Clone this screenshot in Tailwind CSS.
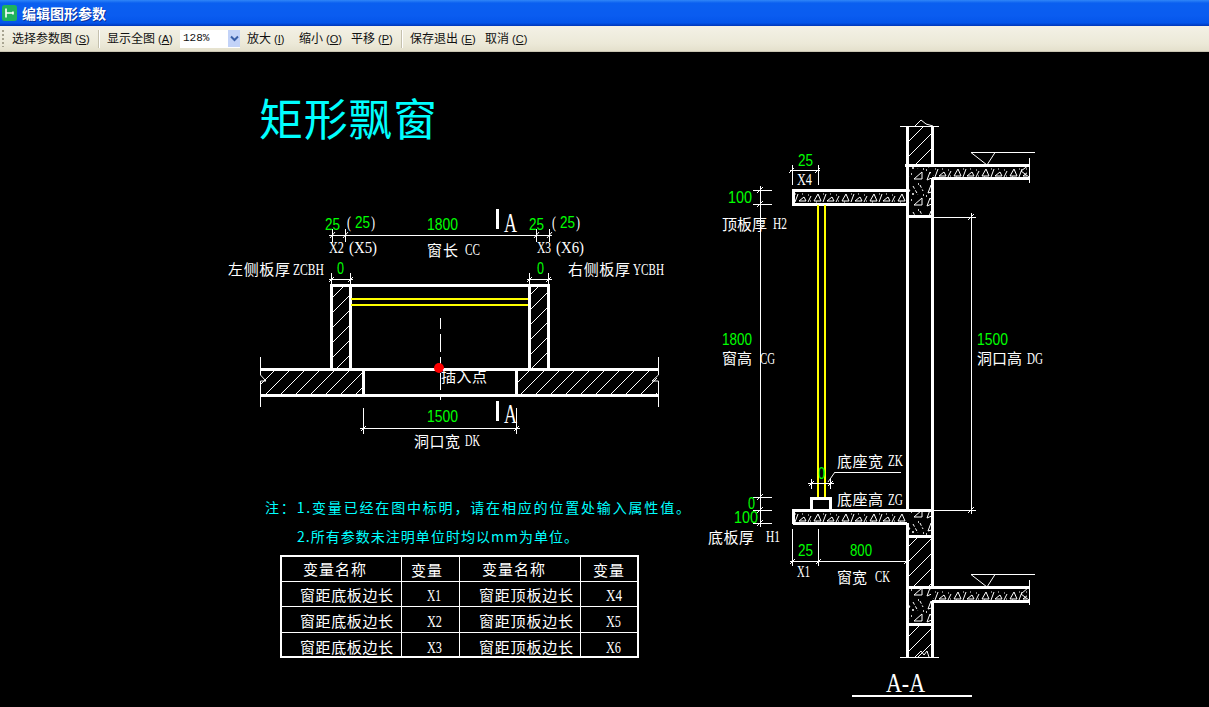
<!DOCTYPE html>
<html lang="zh-CN">
<head>
  <meta charset="UTF-8" />
  <title>编辑图形参数</title>
  <script src="https://cdn.jsdelivr.net/npm/@tailwindcss/browser@4"></script>
</head>
<body class="h-[707px] w-[1209px] overflow-hidden bg-black flex flex-col font-['Noto_Sans_CJK_SC',sans-serif]">

  <!-- title bar -->
  <div class="h-[26px] shrink-0 flex items-center pl-[2px] gap-[5px] bg-[linear-gradient(#2f86f8_0%,#0a5ff0_12%,#0a5cf0_60%,#0455ea_88%,#0036b8_100%)]">
    <svg width="15" height="16" viewBox="0 0 15 16">
      <rect x="0" y="0" width="15" height="16" rx="2.5" fill="#1fb35c" />
      <path d="M4 3.5V12.5M4 8H11M11 6.5V9.5" stroke="#fff" stroke-width="1.6" fill="none" />
    </svg>
    <span class="text-[14px] font-bold leading-none text-white [text-shadow:1px_1px_0_#0a2f9a]">编辑图形参数</span>
  </div>

  <!-- toolbar -->
  <div class="h-[26px] shrink-0 flex items-center text-[12px] leading-none text-[#111] bg-[linear-gradient(#f3f1e6,#ece9d8_70%,#e4e0cc)] border-b border-[#c9c5b2]">
    <div class="ml-[2px] w-[2px] h-[17px] bg-[repeating-linear-gradient(#a8a491_0_2px,transparent_2px_4px)]"></div>
    <span class="ml-[8px] w-[77px] whitespace-nowrap">选择参数图<span class="ml-[3px] font-['Liberation_Sans'] text-[11px]">(<u>S</u>)</span></span>
    <div class="ml-[9px] w-[2px] h-[18px] bg-[#c5c1ae] border-r border-white"></div>
    <span class="ml-[7px] w-[65px] whitespace-nowrap">显示全图<span class="ml-[3px] font-['Liberation_Sans'] text-[11px]">(<u>A</u>)</span></span>
    <div class="ml-[8px] w-[60px] h-[18px] bg-white flex items-center justify-between pl-[3px] font-['Liberation_Mono'] text-[11px]">
      <span>128%</span>
      <div class="w-[12px] h-[17px] bg-[#c3d3f8] flex items-center justify-center">
        <svg width="9" height="7" viewBox="0 0 9 7"><path d="M1 1.5L4.5 5L8 1.5" stroke="#3a5fa8" stroke-width="2" fill="none" /></svg>
      </div>
    </div>
    <span class="ml-[7px] w-[40px] whitespace-nowrap">放大<span class="ml-[3px] font-['Liberation_Sans'] text-[11px]">(<u>I</u>)</span></span>
    <span class="ml-[12px] w-[41px] whitespace-nowrap">缩小<span class="ml-[3px] font-['Liberation_Sans'] text-[11px]">(<u>O</u>)</span></span>
    <span class="ml-[11px] w-[41px] whitespace-nowrap">平移<span class="ml-[3px] font-['Liberation_Sans'] text-[11px]">(<u>P</u>)</span></span>
    <div class="ml-[9px] w-[2px] h-[18px] bg-[#c5c1ae] border-r border-white"></div>
    <span class="ml-[7px] w-[64px] whitespace-nowrap">保存退出<span class="ml-[3px] font-['Liberation_Sans'] text-[11px]">(<u>E</u>)</span></span>
    <span class="ml-[11px] w-[41px] whitespace-nowrap">取消<span class="ml-[3px] font-['Liberation_Sans'] text-[11px]">(<u>C</u>)</span></span>
  </div>

  <!-- drawing canvas, coordinates are page pixels -->
  <svg class="block shrink-0" width="1209" height="655" viewBox="0 52 1209 655">
    <defs>
      <pattern id="hatch" width="15" height="15" patternUnits="userSpaceOnUse">
        <path d="M0 15L15 0" stroke="#fff" stroke-width="1" shape-rendering="crispEdges" />
      </pattern>
      <pattern id="concrete" width="28" height="14" patternUnits="userSpaceOnUse">
        <path d="M2 9L6 2L9 9ZM15 9L20 5L22 9Z" stroke="#fff" fill="none" stroke-width="1" />
        <path d="M11 10L14 2M24 10L27 4" stroke="#fff" stroke-width="1" />
        <path d="M11 2h1M24 3h1M4 10h1M18 2h1M26 9h1" stroke="#fff" stroke-width="1" />
      </pattern>
      <pattern id="concreteTop" href="#concrete" y="192" />
      <pattern id="concreteBottom" href="#concrete" y="512" />
      <pattern id="concreteFloor1" href="#concrete" y="167" />
      <pattern id="concreteFloor2" href="#concrete" y="590" />
      <pattern id="concreteBig" width="25" height="26" patternUnits="userSpaceOnUse">
        <path d="M3 11L6 3L10 9ZM14 23L22 16L22 23ZM2 24L5 16L9 21Z" stroke="#fff" fill="none" stroke-width="1" />
        <path d="M13 4L18 13M20 3L23 9" stroke="#fff" stroke-width="1" stroke-dasharray="3 2" />
        <path d="M12 12h2M1 14h1M18 2h1M23 13h1M11 18h1" stroke="#fff" stroke-width="1.5" />
      </pattern>
    </defs>

    <!-- fills -->
    <rect x="333" y="287" width="16" height="81" fill="url(#hatch)" />
    <rect x="531" y="287" width="16" height="81" fill="url(#hatch)" />
    <rect x="261" y="371" width="101" height="23" fill="url(#hatch)" />
    <rect x="518" y="371" width="139" height="23" fill="url(#hatch)" />
    <rect x="908" y="127" width="23" height="37" fill="url(#hatch)" />
    <rect x="908" y="537" width="23" height="49" fill="url(#hatch)" />
    <rect x="908" y="625" width="23" height="32" fill="url(#hatch)" />
    <rect x="794" y="192" width="112" height="11" fill="url(#concreteTop)" />
    <rect x="794" y="512" width="112" height="10" fill="url(#concreteBottom)" />
    <rect x="933" y="167" width="94" height="10" fill="url(#concreteFloor1)" />
    <rect x="933" y="589" width="94" height="11" fill="url(#concreteFloor2)" />
    <rect x="909" y="167" width="22" height="48" fill="url(#concreteBig)" />
    <rect x="909" y="512" width="22" height="23" fill="url(#concreteBig)" />
    <rect x="909" y="589" width="22" height="34" fill="url(#concreteBig)" />

    <!-- heavy outlines -->
    <g stroke="#fff" stroke-width="3" fill="none" shape-rendering="crispEdges">
      <path d="M331.5 369V285.5H548.5V369M350.5 287V369M529.5 287V369" />
      <path d="M260 369.5H658M260 395H658M363.5 369V395M516.5 369V395" />
      <path d="M907 126V510M907 523V657M932 126V165M932 178V587M932 601V657" />
      <path d="M905 165.5H1029M932 178.5H1029M907 216.5H932" />
      <path d="M907 190.5H793V204H907" />
      <path d="M811.5 510V498.5H830.5V510" />
      <path d="M793 510.5H932M793 523H907V523M793 509V524M907 536.5H932M907 587.5H1029M932 601H1029M907 624.5H932" />
    </g>
    <path d="M852 696H972" stroke="#fff" stroke-width="2" shape-rendering="crispEdges" />
    <path d="M497.5 209V229M497.5 401V421" stroke="#fff" stroke-width="3" shape-rendering="crispEdges" />

    <!-- glazing -->
    <g stroke="#ffff00" stroke-width="2" shape-rendering="crispEdges">
      <path d="M351 299H528M351 305H528" />
      <path d="M817.5 205V497M824.5 205V497" />
    </g>

    <!-- thin dimension lines -->
    <g stroke="#fff" stroke-width="1" fill="none" shape-rendering="crispEdges">
      <path d="M329 235.5H552M332.5 229V242M345.5 229V242M536.5 229V242M549.5 229V242" />
      <path d="M329 279.5H353M527 279.5H552M331.5 273V284M350.5 273V284M529.5 273V284M548.5 273V284" />
      <path d="M360 428.5H520M363.5 408V434M516.5 408V434" />
      <path d="M260.5 357V375M260.5 388V407M658.5 357V375M658.5 388V407" />
      <path d="M440.5 318V329M440.5 334V352M440.5 357V366M440.5 373V390M440.5 395V400" />
      <path d="M900 126.5H939M900 657.5H939" />
      <path d="M971 152.5H1035M971 574.5H1035M1029.5 158V183M1029.5 580V605" />
      <path d="M932 217.5H976M932 510.5H976M971.5 213V514" />
      <path d="M790 170.5H820M792.5 165V185M818.5 165V185" />
      <path d="M753 190.5H772M753 204.5H772M753 497.5H772M753 510.5H772M753 523.5H772M760.5 186V527" />
      <path d="M808 483.5H834M811.5 479V489M830.5 479V489M835 472.5H901" />
      <path d="M790 561.5H907M792.5 529V566M818.5 529V566" />
    </g>
    <!-- ticks, breaks, level marks -->
    <g stroke="#fff" stroke-width="1" fill="none">
      <path d="M330 238L335 232M343 238L348 232M534 238L539 232M547 238L552 232" />
      <path d="M329 282L334 277M348 282L353 277M527 282L532 277M546 282L551 277" />
      <path d="M361 431L366 426M514 431L519 426" />
      <path d="M260.5 375L266 381H260.5V388M658.5 375L652 381H658.5V388" />
      <path d="M971 152.5L987 165L995 152.5M971 574.5L987 587L995 574.5" />
      <path d="M1029 165L1021 171L1029 177M1029 587L1021 594L1029 600" />
      <path d="M915 126L921 120L926 124L933 126M915 657L921 651L924 655L927 651L929 657" />
      <path d="M968 220L974 214M968 513L974 507" />
      <path d="M789 173L794 168M815 173L820 168" />
      <path d="M757 193L763 187M757 207L763 201M757 500L763 494M757 513L763 507M757 526L763 520" />
      <path d="M828 482L835 472M809 486L814 481M828 486L833 481" />
      <path d="M790 564L795 559M816 564L821 559M904 564L909 559" />
    </g>
    <circle cx="439" cy="368" r="5" fill="#ff0000" />

    <!-- table -->
    <g stroke="#fff" fill="none" shape-rendering="crispEdges">
      <rect x="280.5" y="555.5" width="357" height="101" stroke-width="2" />
      <path d="M401.5 555V657M459.5 555V657M580.5 555V657M280 581.5H638M280 606.5H638M280 632.5H638" stroke-width="1.5" />
    </g>

    <!-- title and notes -->
    <text x="259" y="136" textLength="178" class="fill-[#00ffff] text-[44px]">矩形飘窗</text>
    <g class="fill-[#00ffff] text-[14px]">
      <text x="265" y="513" textLength="425">注&#xFF1A;1.变量已经在图中标明&#xFF0C;请在相应的位置处输入属性值。</text>
      <text x="297" y="542" textLength="281">2.所有参数未注明单位时均以mm为单位。</text>
    </g>

    <!-- chinese labels -->
    <g class="fill-white text-[15px]">
      <text x="427" y="256" textLength="31">窗长</text>
      <text x="228" y="275" textLength="62">左侧板厚</text>
      <text x="568" y="275" textLength="62">右侧板厚</text>
      <text x="441" y="382" textLength="46">插入点</text>
      <text x="414" y="447" textLength="46">洞口宽</text>
      <text x="722" y="230" textLength="45">顶板厚</text>
      <text x="722" y="364" textLength="30">窗高</text>
      <text x="977" y="364" textLength="45">洞口高</text>
      <text x="837" y="467" textLength="46">底座宽</text>
      <text x="837" y="505" textLength="46">底座高</text>
      <text x="708" y="543" textLength="46">底板厚</text>
      <text x="837" y="583" textLength="30">窗宽</text>
      <text x="303" y="575" textLength="63">变量名称</text>
      <text x="411" y="576" textLength="31">变量</text>
      <text x="482" y="575" textLength="63">变量名称</text>
      <text x="593" y="576" textLength="31">变量</text>
      <text x="300" y="601" textLength="93">窗距底板边长</text>
      <text x="300" y="627" textLength="93">窗距底板边长</text>
      <text x="300" y="653" textLength="93">窗距底板边长</text>
      <text x="479" y="601" textLength="94">窗距顶板边长</text>
      <text x="479" y="627" textLength="94">窗距顶板边长</text>
      <text x="479" y="653" textLength="94">窗距顶板边长</text>
    </g>

    <!-- latin labels -->
    <g class="fill-white text-[17px] font-['Liberation_Serif']">
      <text x="329" y="253" textLength="15" lengthAdjust="spacingAndGlyphs">X2</text>
      <text x="349" y="253" textLength="28" lengthAdjust="spacingAndGlyphs">(X5)</text>
      <text x="537" y="253" textLength="14" lengthAdjust="spacingAndGlyphs">X3</text>
      <text x="556" y="253" textLength="28" lengthAdjust="spacingAndGlyphs">(X6)</text>
      <text x="465" y="255" textLength="15" lengthAdjust="spacingAndGlyphs">CC</text>
      <text x="293" y="275" textLength="31" lengthAdjust="spacingAndGlyphs">ZCBH</text>
      <text x="633" y="275" textLength="31" lengthAdjust="spacingAndGlyphs">YCBH</text>
      <text x="465" y="446" textLength="15" lengthAdjust="spacingAndGlyphs">DK</text>
      <text x="797" y="185" textLength="15" lengthAdjust="spacingAndGlyphs">X4</text>
      <text x="773" y="229" textLength="14" lengthAdjust="spacingAndGlyphs">H2</text>
      <text x="760" y="364" textLength="15" lengthAdjust="spacingAndGlyphs">CG</text>
      <text x="1027" y="364" textLength="16" lengthAdjust="spacingAndGlyphs">DG</text>
      <text x="888" y="466" textLength="15" lengthAdjust="spacingAndGlyphs">ZK</text>
      <text x="888" y="505" textLength="15" lengthAdjust="spacingAndGlyphs">ZG</text>
      <text x="766" y="542" textLength="14" lengthAdjust="spacingAndGlyphs">H1</text>
      <text x="797" y="577" textLength="13" lengthAdjust="spacingAndGlyphs">X1</text>
      <text x="875" y="582" textLength="15" lengthAdjust="spacingAndGlyphs">CK</text>
      <text x="427" y="601" textLength="14" lengthAdjust="spacingAndGlyphs">X1</text>
      <text x="427" y="627" textLength="15" lengthAdjust="spacingAndGlyphs">X2</text>
      <text x="427" y="653" textLength="15" lengthAdjust="spacingAndGlyphs">X3</text>
      <text x="606" y="601" textLength="16" lengthAdjust="spacingAndGlyphs">X4</text>
      <text x="606" y="627" textLength="15" lengthAdjust="spacingAndGlyphs">X5</text>
      <text x="606" y="653" textLength="15" lengthAdjust="spacingAndGlyphs">X6</text>
      <text x="347" y="228" textLength="4" lengthAdjust="spacingAndGlyphs">(</text>
      <text x="371" y="228" textLength="4" lengthAdjust="spacingAndGlyphs">)</text>
      <text x="552" y="228" textLength="4" lengthAdjust="spacingAndGlyphs">(</text>
      <text x="576" y="228" textLength="4" lengthAdjust="spacingAndGlyphs">)</text>
    </g>
    <g class="fill-white text-[27px] font-['Liberation_Serif']">
      <text x="504" y="232" textLength="13" lengthAdjust="spacingAndGlyphs">A</text>
      <text x="504" y="423" textLength="13" lengthAdjust="spacingAndGlyphs">A</text>
      <text x="886" y="692" textLength="39" lengthAdjust="spacingAndGlyphs">A-A</text>
    </g>

    <!-- green dimension values -->
    <g class="fill-[#00ff00] text-[16px] font-['Liberation_Sans']">
      <text x="325" y="230" textLength="15" lengthAdjust="spacingAndGlyphs">25</text>
      <text x="355" y="228" textLength="15" lengthAdjust="spacingAndGlyphs">25</text>
      <text x="427" y="230" textLength="31" lengthAdjust="spacingAndGlyphs">1800</text>
      <text x="529" y="230" textLength="15" lengthAdjust="spacingAndGlyphs">25</text>
      <text x="560" y="228" textLength="15" lengthAdjust="spacingAndGlyphs">25</text>
      <text x="337" y="274" textLength="7" lengthAdjust="spacingAndGlyphs">0</text>
      <text x="537" y="274" textLength="7" lengthAdjust="spacingAndGlyphs">0</text>
      <text x="427" y="422" textLength="31" lengthAdjust="spacingAndGlyphs">1500</text>
      <text x="798" y="166" textLength="15" lengthAdjust="spacingAndGlyphs">25</text>
      <text x="728" y="203" textLength="24" lengthAdjust="spacingAndGlyphs">100</text>
      <text x="722" y="345" textLength="30" lengthAdjust="spacingAndGlyphs">1800</text>
      <text x="977" y="345" textLength="31" lengthAdjust="spacingAndGlyphs">1500</text>
      <text x="818" y="479" textLength="7" lengthAdjust="spacingAndGlyphs">0</text>
      <text x="748" y="509" textLength="7" lengthAdjust="spacingAndGlyphs">0</text>
      <text x="734" y="523" textLength="24" lengthAdjust="spacingAndGlyphs">100</text>
      <text x="798" y="556" textLength="15" lengthAdjust="spacingAndGlyphs">25</text>
      <text x="850" y="556" textLength="22" lengthAdjust="spacingAndGlyphs">800</text>
    </g>
  </svg>
</body>
</html>
